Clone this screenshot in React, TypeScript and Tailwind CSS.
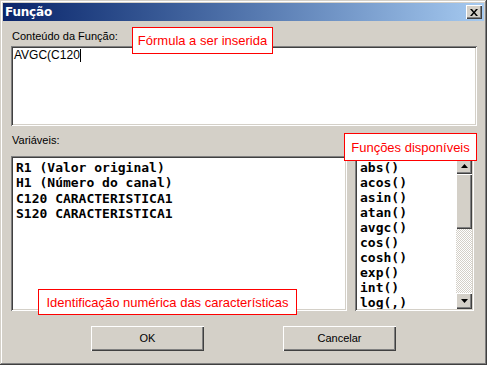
import React from 'react';

const variaveis = [
  'R1 (Valor original)',
  'H1 (Número do canal)',
  'C120 CARACTERISTICA1',
  'S120 CARACTERISTICA1',
];

const funcoes = ['abs()', 'acos()', 'asin()', 'atan()', 'avgc()', 'cos()', 'cosh()', 'exp()', 'int()', 'log(,)'];

const sunken =
  'shadow-[inset_1px_1px_#808080,inset_-1px_-1px_#ffffff,inset_2px_2px_#404040,inset_-2px_-2px_#d4d0c8]';
const raised =
  'shadow-[inset_1px_1px_#ffffff,inset_-1px_-1px_#404040,inset_-2px_-2px_#808080]';

function Note({ text, className }: { text: string; className: string }) {
  return (
    <div
      className={`absolute border border-[#ff0000] bg-white text-[#ff0000] text-[13px] leading-none flex items-center justify-center font-['Liberation_Sans',Arial,sans-serif] ${className}`}
    >
      {text}
    </div>
  );
}

export default function App() {
  return (
    <div className="relative w-[487px] h-[365px] bg-[#d4d0c8] p-[3px] shadow-[inset_-1px_-1px_#404040,inset_1px_1px_#d4d0c8,inset_-2px_-2px_#808080,inset_2px_2px_#ffffff] font-['Liberation_Sans',Arial,sans-serif] text-[11px] text-black overflow-hidden">
      {/* Title bar */}
      <div className="h-[18px] flex items-center justify-between pl-[2px] pr-[2px] bg-gradient-to-r from-[#0a246a] to-[#a6caf0]">
        <span className="text-white font-bold text-[12px] font-['DejaVu_Sans',sans-serif] tracking-[-0.2px]">Função</span>
        <div className={`w-[16px] h-[14px] bg-[#d4d0c8] flex items-center justify-center ${raised}`}>
          <svg width="8" height="7" viewBox="0 0 8 7">
            <path d="M0 0h2l2 2.5L6 0h2L5 3.5 8 7H6L4 4.5 2 7H0l3-3.5z" fill="#000" />
          </svg>
        </div>
      </div>

      <div className="px-[8px]">
        <div className="mt-[9px] ml-[1px] h-[13px] leading-[13px]">Conteúdo da Função:</div>
        <div className={`mt-[3px] h-[80px] w-[466px] bg-white ${sunken} px-[3px] pt-[3px] text-[12px] leading-[13px] flex items-start`}>
          <span>AVGC(C120</span>
          <span className="w-px h-[13px] bg-black" />
        </div>

        <div className="mt-[8px] ml-[1px] h-[13px] leading-[13px]">Variáveis:</div>

        <div className="mt-[9px] flex h-[155px]">
          <div className={`w-[336px] h-full bg-white ${sunken} pl-[5px] pt-[4px] font-['DejaVu_Sans_Mono',monospace] font-bold text-[13px] leading-[15.3px]`}>
            {variaveis.map((v) => (
              <div key={v} className="whitespace-pre">{v}</div>
            ))}
          </div>
          <div className={`ml-[8px] w-[119px] h-full bg-white ${sunken} flex p-[2px]`}>
            <div className="flex-1 pl-[3px] pt-[2px] font-['DejaVu_Sans_Mono',monospace] font-bold text-[13px] leading-[15px] overflow-hidden">
              {funcoes.map((f) => (
                <div key={f}>{f}</div>
              ))}
            </div>
            <div className="w-[16px] h-full flex flex-col">
              <div className={`h-[16px] bg-[#d4d0c8] ${raised} flex items-center justify-center`}>
                <svg width="7" height="4" viewBox="0 0 7 4">
                  <path d="M3.5 0L7 4H0z" fill="#000" />
                </svg>
              </div>
              <div className={`h-[55px] bg-[#d4d0c8] ${raised}`} />
              <div className="flex-1 bg-[repeating-conic-gradient(#d4d0c8_0%_25%,#ffffff_0%_50%)] bg-[length:2px_2px]" />
              <div className={`h-[16px] bg-[#d4d0c8] ${raised} flex items-center justify-center`}>
                <svg width="7" height="4" viewBox="0 0 7 4">
                  <path d="M0 0h7L3.5 4z" fill="#000" />
                </svg>
              </div>
            </div>
          </div>
        </div>

        <div className="mt-[15px] flex">
          <button className={`ml-[80px] w-[113px] h-[25px] bg-[#d4d0c8] ${raised} text-[11px]`}>OK</button>
          <button className={`ml-[79px] w-[113px] h-[25px] bg-[#d4d0c8] ${raised} text-[11px]`}>Cancelar</button>
        </div>
      </div>

      <Note text="Fórmula a ser inserida" className="left-[132px] top-[27px] w-[141px] h-[27px]" />
      <Note text="Funções disponíveis" className="left-[344px] top-[133px] w-[133px] h-[28px]" />
      <Note text="Identificação numérica das características" className="left-[38px] top-[289px] w-[259px] h-[26px]" />
    </div>
  );
}
